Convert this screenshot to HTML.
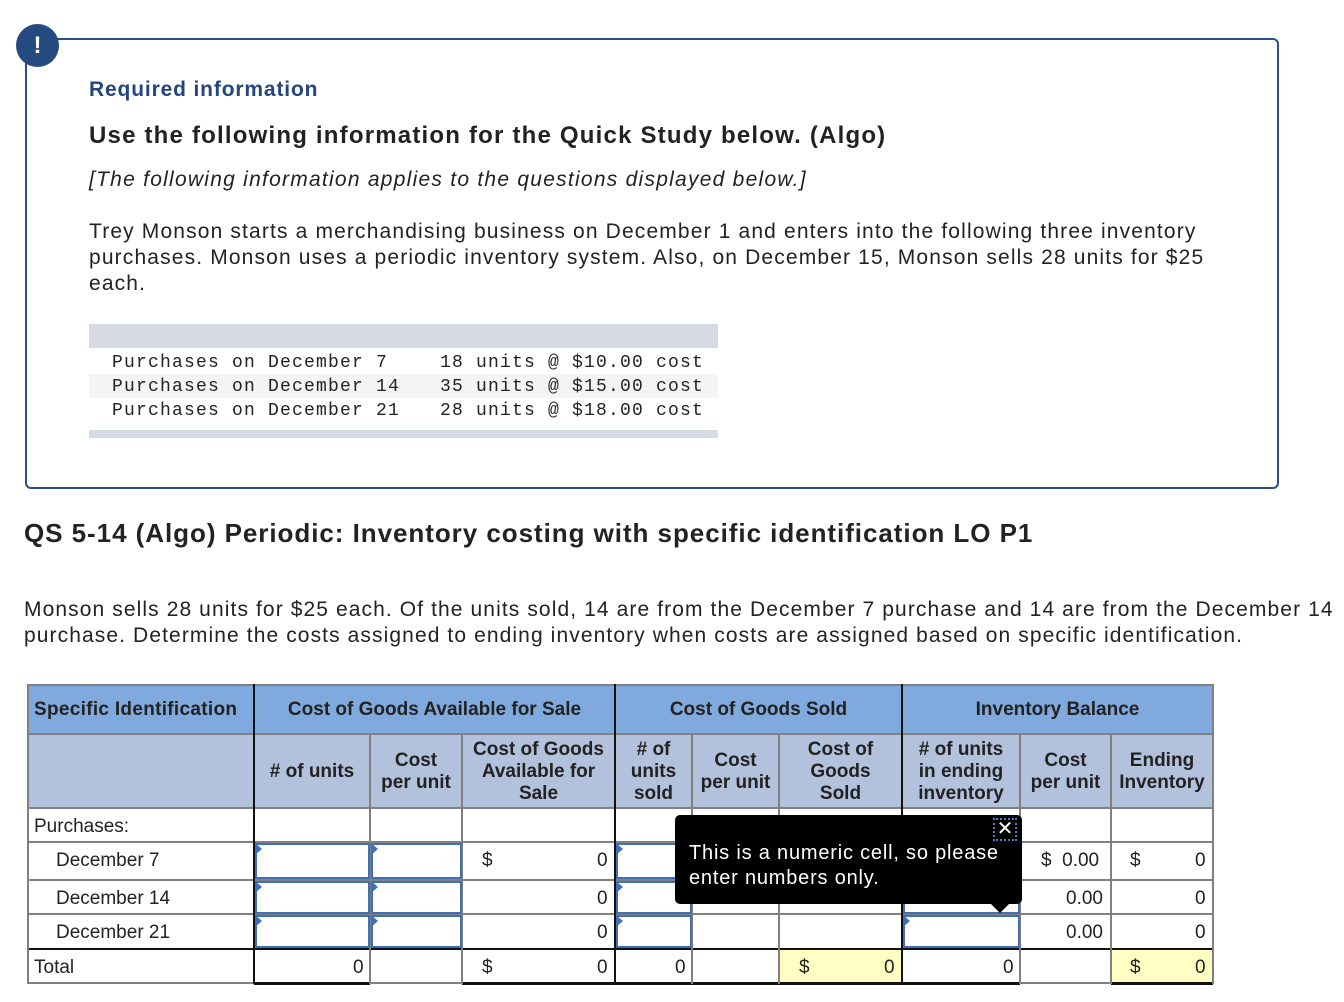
<!DOCTYPE html>
<html><head><meta charset="utf-8"><style>
*{margin:0;padding:0;box-sizing:border-box}
body{width:1344px;height:1002px;background:#fff;position:relative;overflow:hidden;font-family:"Liberation Sans",Arial,sans-serif;color:#222}
.a{position:absolute;white-space:nowrap}
.box{position:absolute;left:25px;top:38px;width:1254px;height:451px;border:2px solid #2a4e86;border-radius:6px}
.circ{position:absolute;left:16px;top:24px;width:43px;height:43px;border-radius:50%;background:#244a80;color:#fff;font-weight:bold;font-size:24px;text-align:center;line-height:43px}
.mono{font-family:"Liberation Mono",monospace;font-size:18px;letter-spacing:1.2px;color:#222}
.h{position:absolute;height:2px;background:#808080}
.v{position:absolute;width:2px;background:#808080}
.vb{position:absolute;width:2px;background:#111}
.t{position:absolute;font-size:19px;color:#222;white-space:nowrap}
.hd{position:absolute;font-size:19px;font-weight:bold;color:#222;text-align:center;line-height:22px;display:flex;align-items:center;justify-content:center}
.in{position:absolute;border:2px solid #3e6fb8;background:#fff}
.in:before{content:"";position:absolute;left:-2px;top:-2px;border-left:7px solid #3e6fb8;border-top:6px solid transparent;border-bottom:6px solid transparent}
</style></head><body>
<div class="box"></div>
<div class="circ">!</div>
<div class="a" style="left:89px;top:78px;font-size:21px;font-weight:bold;color:#23467e;letter-spacing:0.85px">Required information</div>
<div class="a" style="left:89px;top:122px;font-size:24px;font-weight:bold;color:#222;letter-spacing:1.2px">Use the following information for the Quick Study below. (Algo)</div>
<div class="a" style="left:89px;top:168px;font-size:21px;font-style:italic;color:#222;letter-spacing:1.25px">[The following information applies to the questions displayed below.]</div>
<div class="a" style="left:89px;top:219px;font-size:21px;line-height:26px;letter-spacing:1.15px">Trey Monson starts a merchandising business on December 1 and enters into the following three inventory<br>purchases. Monson uses a periodic inventory system. Also, on December 15, Monson sells 28 units for $25<br>each.</div>
<div style="position:absolute;left:89px;top:324px;width:629px;height:24px;background:#d6dbe4"></div>
<div style="position:absolute;left:89px;top:374px;width:629px;height:24px;background:#f4f4f4"></div>
<div style="position:absolute;left:89px;top:430px;width:629px;height:8px;background:#d6dbe4"></div>
<div class="a mono" style="left:112px;top:351px;line-height:24px">Purchases on December 7<br>Purchases on December 14<br>Purchases on December 21</div>
<div class="a mono" style="left:440px;top:351px;line-height:24px">18 units @ $10.00 cost<br>35 units @ $15.00 cost<br>28 units @ $18.00 cost</div>

<div class="a" style="left:24px;top:518px;font-size:26px;font-weight:bold;color:#222;letter-spacing:0.95px">QS 5-14 (Algo) Periodic: Inventory costing with specific identification LO P1</div>
<div class="a" style="left:24px;top:597px;font-size:21px;line-height:26px;letter-spacing:1.1px">Monson sells 28 units for $25 each. Of the units sold, 14 are from the December 7 purchase and 14 are from the December 14<br>purchase. Determine the costs assigned to ending inventory when costs are assigned based on specific identification.</div>

<div style="position:absolute;left:28px;top:685px;width:1185px;height:49px;background:#80aadd"></div>
<div style="position:absolute;left:28px;top:734px;width:1185px;height:74px;background:#b3c2dc"></div>
<div style="position:absolute;left:779px;top:949px;width:123px;height:35px;background:#ffffc4"></div>
<div style="position:absolute;left:1111px;top:949px;width:102px;height:35px;background:#ffffc4"></div>
<div class="h" style="left:27px;top:684px;width:1187px"></div>
<div class="h" style="left:27px;top:733px;width:1187px"></div>
<div class="h" style="left:27px;top:807px;width:1187px"></div>
<div class="h" style="left:27px;top:841px;width:1187px"></div>
<div class="h" style="left:27px;top:879px;width:1187px"></div>
<div class="h" style="left:27px;top:913px;width:1187px"></div>
<div class="h" style="left:27px;top:948px;width:1187px;background:#111"></div>
<div class="h" style="left:27px;top:982px;width:1187px"></div>
<div class="h" style="left:254px;top:982px;width:116px;height:3px;background:#111"></div>
<div class="h" style="left:462px;top:982px;width:440px;height:3px;background:#111"></div>
<div class="h" style="left:902px;top:982px;width:118px;height:3px;background:#111"></div>
<div class="h" style="left:1111px;top:982px;width:102px;height:3px;background:#111"></div>
<div class="v" style="left:27px;top:684px;height:300px"></div>
<div class="vb" style="left:253px;top:684px;height:300px"></div>
<div class="v" style="left:369px;top:734px;height:250px"></div>
<div class="v" style="left:461px;top:734px;height:250px"></div>
<div class="vb" style="left:614px;top:684px;height:300px"></div>
<div class="v" style="left:691px;top:734px;height:250px"></div>
<div class="v" style="left:778px;top:734px;height:250px"></div>
<div class="vb" style="left:901px;top:684px;height:300px"></div>
<div class="v" style="left:1019px;top:734px;height:250px"></div>
<div class="v" style="left:1110px;top:734px;height:250px"></div>
<div class="v" style="left:1212px;top:684px;height:300px"></div>

<div class="hd" style="left:28px;top:686px;width:226px;height:48px;justify-content:flex-start;padding-left:6px;letter-spacing:0.3px">Specific Identification</div>
<div class="hd" style="left:254px;top:686px;width:361px;height:48px">Cost of Goods Available for Sale</div>
<div class="hd" style="left:615px;top:686px;width:287px;height:48px">Cost of Goods Sold</div>
<div class="hd" style="left:902px;top:686px;width:311px;height:48px">Inventory Balance</div>
<div class="hd" style="left:254px;top:735px;width:116px;height:73px">#&nbsp;of units</div>
<div class="hd" style="left:370px;top:735px;width:92px;height:73px">Cost<br>per unit</div>
<div class="hd" style="left:462px;top:735px;width:153px;height:73px">Cost of Goods<br>Available for<br>Sale</div>
<div class="hd" style="left:615px;top:735px;width:77px;height:73px"># of<br>units<br>sold</div>
<div class="hd" style="left:692px;top:735px;width:87px;height:73px">Cost<br>per unit</div>
<div class="hd" style="left:779px;top:735px;width:123px;height:73px">Cost of<br>Goods<br>Sold</div>
<div class="hd" style="left:902px;top:735px;width:118px;height:73px"># of units<br>in ending<br>inventory</div>
<div class="hd" style="left:1020px;top:735px;width:91px;height:73px">Cost<br>per unit</div>
<div class="hd" style="left:1111px;top:735px;width:102px;height:73px">Ending<br>Inventory</div>

<div class="t" style="left:34px;top:816px">Purchases:</div>
<div class="t" style="left:56px;top:850px">December 7</div>
<div class="t" style="left:56px;top:888px">December 14</div>
<div class="t" style="left:56px;top:922px">December 21</div>
<div class="t" style="left:34px;top:957px">Total</div>

<div class="in" style="left:255px;top:843px;width:115px;height:36px"></div>
<div class="in" style="left:371px;top:843px;width:91px;height:36px"></div>
<div class="in" style="left:255px;top:881px;width:115px;height:33px"></div>
<div class="in" style="left:371px;top:881px;width:91px;height:33px"></div>
<div class="in" style="left:255px;top:915px;width:115px;height:33px"></div>
<div class="in" style="left:371px;top:915px;width:91px;height:33px"></div>
<div class="in" style="left:616px;top:843px;width:76px;height:36px"></div>
<div class="in" style="left:616px;top:881px;width:76px;height:33px"></div>
<div class="in" style="left:616px;top:915px;width:76px;height:33px"></div>
<div class="in" style="left:903px;top:881px;width:117px;height:33px"></div>
<div class="in" style="left:903px;top:915px;width:117px;height:33px"></div>

<div class="t" style="left:482px;top:850px">$</div>
<div class="t" style="left:597px;top:850px">0</div>
<div class="t" style="left:597px;top:888px">0</div>
<div class="t" style="left:597px;top:922px">0</div>
<div class="t" style="left:353px;top:957px">0</div>
<div class="t" style="left:482px;top:957px">$</div>
<div class="t" style="left:597px;top:957px">0</div>
<div class="t" style="left:675px;top:957px">0</div>
<div class="t" style="left:799px;top:957px">$</div>
<div class="t" style="left:884px;top:957px">0</div>
<div class="t" style="left:1003px;top:957px">0</div>
<div class="t" style="left:1041px;top:850px">$&nbsp; 0.00</div>
<div class="t" style="left:1066px;top:888px">0.00</div>
<div class="t" style="left:1066px;top:922px">0.00</div>
<div class="t" style="left:1130px;top:850px">$</div>
<div class="t" style="left:1195px;top:850px">0</div>
<div class="t" style="left:1195px;top:888px">0</div>
<div class="t" style="left:1195px;top:922px">0</div>
<div class="t" style="left:1130px;top:957px">$</div>
<div class="t" style="left:1195px;top:957px">0</div>

<div style="position:absolute;left:675px;top:815px;width:347px;height:89px;background:#000;border-radius:5px"></div>
<div style="position:absolute;left:990px;top:903px;width:0;height:0;border-left:10px solid transparent;border-right:10px solid transparent;border-top:10px solid #000"></div>
<div class="a" style="left:689px;top:841px;font-size:20px;line-height:25px;color:#fff;letter-spacing:0.8px">This is a numeric cell, so please<br>enter numbers only.</div>
<div style="position:absolute;left:993px;top:818px;width:24px;height:23px;border:2px dotted #4a7ac8;color:#fff;font-size:20px;line-height:19px;text-align:center">✕</div>
</body></html>
